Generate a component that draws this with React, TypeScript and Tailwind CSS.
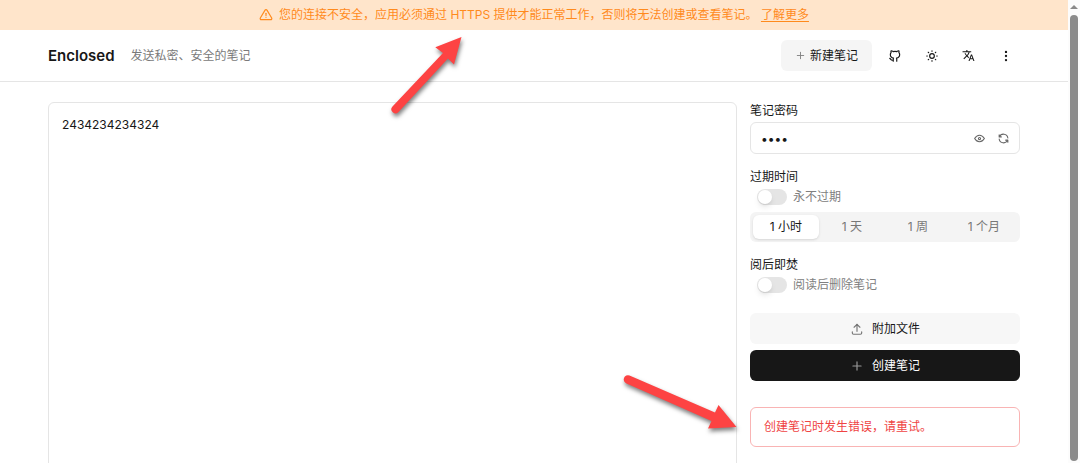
import { useState } from "react";
import clsx from "clsx";
import {
  TbAlertTriangle,
  TbBrandGithub,
  TbDotsVertical,
  TbEye,
  TbPlus,
  TbRefresh,
  TbSun,
  TbUpload,
} from "react-icons/tb";
import { MdOutlineTranslate } from "react-icons/md";

const EXPIRATIONS = ["1 小时", "1 天", "1 周", "1 个月"];

function Switch({ id, label }: { id: string; label: string }) {
  const [checked, setChecked] = useState(false);

  return (
    <div className="mt-1 flex h-4 items-center gap-1.5 pl-[7px]">
      <input
        id={id}
        type="checkbox"
        role="switch"
        checked={checked}
        onChange={(e) => setChecked(e.target.checked)}
        className="h-4 w-[30px] shrink-0 cursor-pointer appearance-none rounded-full bg-[#e5e5e5] before:m-px before:block before:size-[14px] before:rounded-full before:bg-white before:shadow-md checked:bg-[#171717] checked:before:translate-x-[14px]"
      />
      <label htmlFor={id} className="text-[#808080]">
        {label}
      </label>
    </div>
  );
}

function InsecureBanner() {
  return (
    <div className="flex h-[30px] shrink-0 items-center justify-center gap-1.5 bg-[#ffe5cb] text-[#ff8a1c]">
      <TbAlertTriangle size={14} />
      <p>
        您的连接不安全，应用必须通过 HTTPS 提供才能正常工作，否则将无法创建或查看笔记。{" "}
        <a href="#learn-more" className="underline underline-offset-2">
          了解更多
        </a>
      </p>
    </div>
  );
}

function Header() {
  return (
    <header className="flex h-[52px] shrink-0 items-center justify-between border-b border-[#e5e5e5] px-12">
      <div className="flex items-center gap-4">
        <h1 className="text-[15px] font-semibold">Enclosed</h1>
        <p className="pt-0.5 text-[#7a7a7a]">发送私密、安全的笔记</p>
      </div>
      <div className="flex items-center">
        <button className="mr-1 flex h-[31px] items-center gap-1 rounded-md bg-[#f5f5f5] px-3.5">
          <TbPlus size={11} className="text-[#808080]" />
          新建笔记
        </button>
        <div className="-mr-1 flex items-center">
          <button aria-label="GitHub" className="flex h-8 w-[37px] items-center justify-center">
            <TbBrandGithub size={14} />
          </button>
          <button aria-label="主题" className="flex h-8 w-[37px] items-center justify-center">
            <TbSun size={14} />
          </button>
          <button aria-label="语言" className="flex h-8 w-[37px] items-center justify-center">
            <MdOutlineTranslate size={13} />
          </button>
          <button aria-label="更多" className="flex h-8 w-[37px] items-center justify-center">
            <TbDotsVertical size={14} strokeWidth={2} />
          </button>
        </div>
      </div>
    </header>
  );
}

function NoteSettings() {
  const [password, setPassword] = useState("1234");
  const [visible, setVisible] = useState(false);
  const [expiration, setExpiration] = useState(EXPIRATIONS[0]);

  return (
    <aside className="flex w-[270px] shrink-0 flex-col pt-px">
      <label htmlFor="password">笔记密码</label>
      <div className="mt-[3px] flex h-8 items-center rounded-md border border-[#e5e5e5] pr-1">
        <input
          id="password"
          type={visible ? "text" : "password"}
          value={password}
          onChange={(e) => setPassword(e.target.value)}
          className="min-w-0 flex-1 pt-0.5 pl-2.5 text-xs outline-none"
        />
        <button
          aria-label="显示密码"
          onClick={() => setVisible(!visible)}
          className="flex size-6 items-center justify-center text-[#666666]"
        >
          <TbEye size={13} />
        </button>
        <button aria-label="随机密码" className="flex size-6 items-center justify-center text-[#666666]">
          <TbRefresh size={13} />
        </button>
      </div>

      <p className="mt-[15px]">过期时间</p>
      <Switch id="never-expire" label="永不过期" />
      <div className="mt-[7px] flex h-[30px] rounded-md bg-[#f4f4f4] p-[3px]">
        {EXPIRATIONS.map((item) => (
          <button
            key={item}
            onClick={() => setExpiration(item)}
            className={clsx(
              "flex-1 rounded-md",
              item === expiration ? "bg-white shadow" : "text-[#777777]"
            )}
          >
            {item}
          </button>
        ))}
      </div>

      <p className="mt-[15px]">阅后即焚</p>
      <Switch id="delete-after-reading" label="阅读后删除笔记" />

      <button className="mt-5 flex h-[31px] items-center justify-center gap-2 rounded-md bg-[#f7f7f7]">
        <TbUpload size={14} className="text-[#777777]" />
        附加文件
      </button>
      <button className="mt-1.5 flex h-[31px] items-center justify-center gap-2 rounded-md bg-[#171717] text-white">
        <TbPlus size={14} className="text-[#999999]" />
        创建笔记
      </button>

      <div role="alert" className="mt-[26px] rounded-md border border-[#f9b4b4] px-[13px] py-[11px] text-[#ef4444]">
        创建笔记时发生错误，请重试。
      </div>
    </aside>
  );
}

// Red annotation arrows laid over the page
function Arrows() {
  return (
    <svg
      width="400"
      height="463"
      viewBox="380 0 400 463"
      aria-hidden="true"
      className="pointer-events-none absolute top-0 left-[380px] drop-shadow-[1px_3px_2px_rgba(0,0,0,0.5)]"
    >
      <g fill="#fd4343">
        <path d="M392.5 106.5 L443 53 L435.3 47.3 L461.5 37 L454 64.5 L448 58.5 L398.5 112 A4 4 0 0 1 392.5 106.5 Z" />
        <path d="M629.5 375.5 L715 412.5 L718.5 405 L736.5 427 L708 428.5 L711.5 421 L626.5 383.5 A4.2 4.2 0 0 1 629.5 375.5 Z" />
      </g>
    </svg>
  );
}

function Scrollbar() {
  return (
    <div className="flex w-3 shrink-0 flex-col items-center bg-[#fcfcfc] pt-[5px] pb-[2px]">
      <svg width="8" height="4" viewBox="0 0 8 4" fill="#8a8a8a">
        <path d="M4 0 L8 4 H0 Z" />
      </svg>
      <div className="mt-1.5 w-2 flex-1 rounded-full bg-[#8b8b8b]" />
    </div>
  );
}

export default function App() {
  const [note, setNote] = useState("2434234234324");

  return (
    <div className="relative flex h-screen overflow-hidden bg-white font-['Inter','Noto_Sans_CJK_SC',sans-serif] text-xs text-[#171717]">
      <div className="flex min-w-0 flex-1 flex-col">
        <InsecureBanner />
        <Header />
        <main className="flex min-h-0 flex-1 gap-[13px] overflow-hidden px-12 pt-5">
          <textarea
            aria-label="笔记"
            value={note}
            onChange={(e) => setNote(e.target.value)}
            className="h-[600px] min-w-0 flex-1 resize-none rounded-md border border-[#e5e5e5] px-[13px] py-3.5 outline-none"
          />
          <NoteSettings />
        </main>
      </div>
      <Scrollbar />
      <Arrows />
    </div>
  );
}
